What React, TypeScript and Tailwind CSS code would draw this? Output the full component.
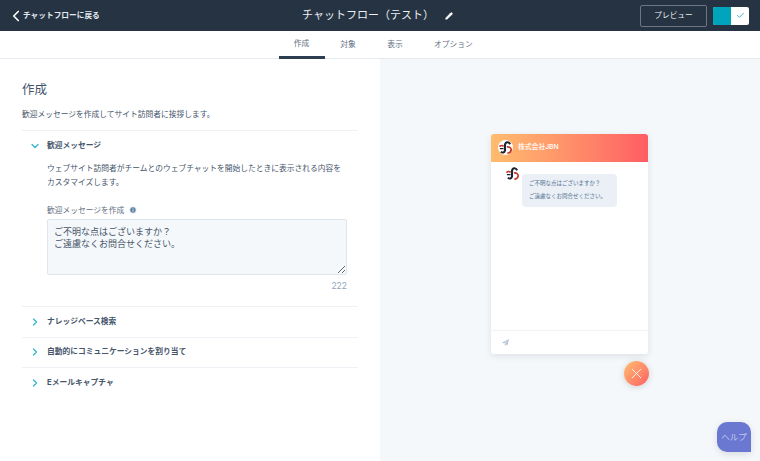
import { ChevronDown, ChevronLeft, ChevronRight, Check, Pencil, Info, X } from "lucide-react";

const font = "font-['Inter','Noto_Sans_CJK_JP',sans-serif]";

function Logo({ size }: { size: number }) {
  return (
    <svg width={size} height={size} viewBox="0 0 32 32" className="shrink-0">
      <circle cx="16" cy="16" r="16" fill="#fff" />
      <path d="M26 9C23 3 16 3 15 10L15 22C14 27 10 28 6 25" fill="none" stroke="#1c2430" strokeWidth="4.4" />
      <path d="M3 14C6 11 10 11 12 14" fill="none" stroke="#c0392b" strokeWidth="3.6" />
      <path d="M19 15C24 14 29 17 28 22C27 26 24 28 20 28" fill="none" stroke="#c0392b" strokeWidth="3.6" />
      <path d="M4 18.5h8" stroke="#1c2430" strokeWidth="2.6" />
    </svg>
  );
}

function Section({ title }: { title: string }) {
  return (
    <div className="flex h-[30.5px] items-center border-t-[1.5px] border-[#eef1f6] pl-[7px]">
      <ChevronRight className="mr-[6px] h-[12px] w-[12px] text-[#2eb5cc]" strokeWidth={2.5} />
      <span className="text-[7.75px] font-bold text-[#46556a]">{title}</span>
    </div>
  );
}

export default function App() {
  return (
    <div className={`flex h-[461px] w-[760px] flex-col overflow-hidden bg-white ${font}`}>
      <header className="flex h-[31px] shrink-0 items-center bg-[#253342] pl-[7px] pr-[11px] text-white">
        <div className="flex w-[295px] items-center">
          <ChevronLeft className="h-[18px] w-[18px]" strokeWidth={2.2} />
          <span className="-ml-[2px] text-[7.7px] font-bold text-[#e4e9ef]">チャットフローに戻る</span>
        </div>
        <div className="flex items-center">
          <span className="text-[11px] text-[#eef1f5]">チャットフロー（テスト）</span>
          <Pencil className="ml-[11px] h-[8px] w-[8px] fill-white" strokeWidth={2} />
        </div>
        <div className="ml-auto flex items-center gap-[6px]">
          <div className="flex h-[22px] w-[67px] items-center justify-center rounded-[2px] border border-[#6b7785] text-[7.7px] text-[#e8ecf0]">
            プレビュー
          </div>
          <div className="flex h-[18px] w-[36px] overflow-hidden rounded-[2px] bg-white">
            <div className="w-[18px] bg-[#00a4bd]" />
            <div className="flex flex-1 items-center justify-center">
              <Check className="h-[9px] w-[9px] text-[#00a4bd]" strokeWidth={2} />
            </div>
          </div>
        </div>
      </header>

      <nav className="flex h-[28px] shrink-0 items-stretch justify-center border-b border-[#e6eaf0] pl-[7px] text-[7.75px] text-[#5f6f82]">
        <div className="-mb-px flex w-[46px] items-center justify-center border-b-[3px] border-[#2d3e50] pt-[1px]">作成</div>
        <div className="flex w-[47px] items-center justify-center">対象</div>
        <div className="flex w-[47px] items-center justify-center">表示</div>
        <div className="flex w-[70px] items-center justify-center">オプション</div>
      </nav>

      <main className="flex min-h-0 flex-1">
        <section className="w-[380px] shrink-0 bg-white pl-[22px] pr-[22px]">
          <h1 className="mt-[22px] text-[12.5px] leading-[18px] text-[#46556a]">作成</h1>
          <p className="mt-[8px] text-[7.75px] leading-[14px] text-[#46556a]">歓迎メッセージを作成してサイト訪問者に挨拶します。</p>

          <div className="mt-[9px] border-t-[1.5px] border-[#eef1f6]">
            <div className="flex h-[29px] items-center pl-[7px]">
              <ChevronDown className="mr-[6px] h-[12px] w-[12px] text-[#2eb5cc]" strokeWidth={2.5} />
              <span className="text-[7.75px] font-bold text-[#46556a]">歓迎メッセージ</span>
            </div>
            <div className="pb-[13px] pl-[25px] pr-[11px]">
              <p className="mt-[2px] text-[7.75px] leading-[13.5px] text-[#46556a]">
                ウェブサイト訪問者がチームとのウェブチャットを開始したときに表示される内容をカスタマイズします。
              </p>
              <div className="mt-[14px] flex items-center text-[7.75px] leading-[14px] text-[#5f6f82]">
                歓迎メッセージを作成
                <Info className="ml-[5px] h-[8px] w-[8px] fill-[#5c7fa3] text-white" strokeWidth={2.5} />
              </div>
              <textarea
                readOnly
                className="mt-[2px] block h-[56px] w-[300px] rounded-[2px] border border-[#dfe5ec] bg-[#f5f8fa] px-[6px] py-[5.5px] text-[9px] leading-[12px] text-[#46556a] outline-none"
                value={"ご不明な点はございますか？\nご遠慮なくお問合せください。"}
              />
              <div className="mt-[4px] w-[300px] text-right text-[8.5px] leading-[14px] text-[#8fa4bd]">222</div>
            </div>
          </div>

          <Section title="ナレッジベース検索" />
          <Section title="自動的にコミュニケーションを割り当て" />
          <Section title="Eメールキャプチャ" />
        </section>

        <section className="relative flex flex-1 justify-center bg-[#f5f8fa] pr-[1px] pt-[74.5px]">
          <div className="flex h-[220.5px] w-[157px] flex-col overflow-hidden rounded-[3px] bg-white shadow-[0_2px_6px_rgba(40,60,80,0.12)]">
            <div className="flex h-[28px] shrink-0 items-center bg-gradient-to-r from-[#ffbc6e] to-[#ff5c64] pl-[7px] pr-[7px]">
              <Logo size={15} />
              <span className="ml-[5px] text-[6.8px] font-medium text-white">株式会社JBN</span>
            </div>
            <div className="flex flex-1 items-start pl-[13.5px] pt-[4px]">
              <Logo size={15} />
              <div className="ml-[2.5px] mt-[8px] rounded-[4px] bg-[#eaf0f6] py-[3px] pl-[7px] pr-[11px] text-[5.5px] leading-[13.5px] text-[#516f90]">
                <p>ご不明な点はございますか？</p>
                <p>ご遠慮なくお問合せください。</p>
              </div>
            </div>
            <div className="flex h-[24px] shrink-0 items-center border-t border-[#f0f3f7] pl-[10.5px]">
              <svg width="7" height="7" viewBox="0 0 10 10">
                <path d="M10 0 0 5l3 1.5L8 2 4 7.2V10l2-2 2 1z" fill="#b8c6d8" />
              </svg>
            </div>
          </div>

          <div className="absolute left-[243.5px] top-[302px] flex h-[25px] w-[25px] items-center justify-center rounded-full bg-gradient-to-br from-[#ffbc6e] to-[#ff5c64] shadow-[0_1px_6px_rgba(40,60,80,0.2)]">
            <X className="h-[17px] w-[17px] text-white" strokeWidth={1.2} />
          </div>
          <div className="absolute left-[337px] top-[363px] flex h-[30px] w-[34px] items-center justify-center rounded-[10px] rounded-br-none bg-[#6a78d1] text-[8.5px] text-[#c2c8ee] shadow-[0_2px_6px_rgba(40,60,80,0.15)]">
            ヘルプ
          </div>
        </section>
      </main>
    </div>
  );
}
